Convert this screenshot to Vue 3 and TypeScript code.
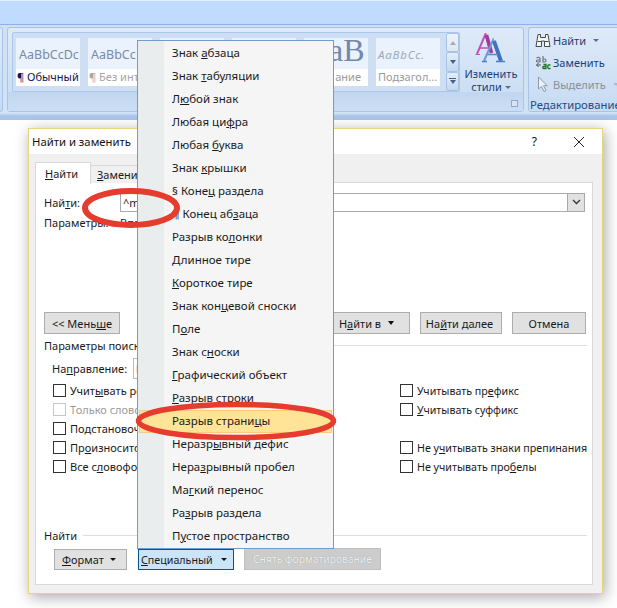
<script setup lang="ts">
const menu = [
  ['Знак ', 'а', 'бзаца'], ['Знак ', 'т', 'абуляции'], ['Л', 'ю', 'бой знак'], ['Любая ци', 'ф', 'ра'],
  ['Любая ', 'б', 'уква'], ['Знак ', 'к', 'рышки'], ['§ Коне', 'ц', ' раздела'], ['¶ Конец аб', 'з', 'аца'],
  ['Разрыв ко', 'л', 'онки'], ['', 'Д', 'линное тире'], ['', 'К', 'ороткое тире'], ['Знак кон', 'ц', 'евой сноски'],
  ['П', 'о', 'ле'], ['Знак с', 'н', 'оски'], ['', 'Г', 'рафический объект'], ['', 'Р', 'азрыв строки'],
  ['Разрыв страни', 'ц', 'ы'], ['Неразр', 'ы', 'вный дефис'], ['Нера', 'з', 'рывный пробел'], ['Ма', 'г', 'кий перенос'],
  ['Ра', 'з', 'рыв раздела'], ['П', 'у', 'стое пространство']
]
const leftChecks = [
  { pre: 'Учит', u: 'ы', post: 'вать регистр', off: false },
  { pre: 'Только слово целиком', u: '', post: '', off: true },
  { pre: 'Подстановочные знаки', u: '', post: '', off: false },
  { pre: 'Пр', u: 'о', post: 'износится как', off: false },
  { pre: 'Все с', u: 'л', post: 'овоформы', off: false }
]
const styles = [
  { id: 1, sample: 'AaBbCcDc', name: '¶ Обычный', kind: 'normal' },
  { id: 2, sample: 'AaBbCc', name: '¶ Без инт', kind: 'dim' },
  { id: 3, sample: '', name: '', kind: 'dim' },
  { id: 4, sample: '', name: '', kind: 'dim' },
  { id: 5, sample: 'aB', name: 'ание', kind: 'big' },
  { id: 6, sample: 'AaBbCc.', name: 'Подзагол...', kind: 'ital' }
]
</script>

<template>
  <div class="page">
    <div class="titlebar"></div>
    <div class="ribbon">
      <div class="group prev-group"></div>
      <div class="group styles-group">
        <div class="gallery">
          <div v-for="s in styles" :key="s.id" class="style-card" :class="s.kind">
            <span class="sample">{{ s.sample }}</span>
            <span class="style-name">{{ s.name }}</span>
          </div>
          <div class="scroller">
            <span class="scroll-btn disabled"><i class="tri up"></i></span>
            <span class="scroll-btn"><i class="tri"></i></span>
            <span class="scroll-btn"><i class="bar"></i><i class="tri"></i></span>
          </div>
        </div>
        <div class="change-styles">
          <svg width="32" height="30" viewBox="0 0 32 30" class="aa">
            <path d="M2 21 L10.500 1 L15 18" fill="none" stroke="#c054b4" stroke-width="2"/>
            <path d="M11.500 2 L16.500 20" fill="none" stroke="#a13c9d" stroke-width="3.600"/>
            <path d="M4.500 15 H14" stroke="#c054b4" stroke-width="1.500"/>
            <path d="M0.500 21.500H5M12 21.500H18" stroke="#c054b4" stroke-width="1.200"/>
            <path d="M9 28 L18 7 L25 28" fill="none" stroke="#6d9ad8" stroke-width="2"/>
            <path d="M19 8 L26 28" fill="none" stroke="#3f73bd" stroke-width="3.800"/>
            <path d="M12.500 21.500 H23" stroke="#5c8bcd" stroke-width="1.600"/>
            <path d="M7 28.500H12M21 28.500H30" stroke="#4a7dc4" stroke-width="1.300"/>
          </svg>
          <span>Изменить</span>
          <span>стили <i class="tri small"></i></span>
        </div>
        <div class="group-foot">
          <span class="launcher"></span>
        </div>
      </div>
      <div class="group edit-group">
        <div class="edit-row">
          <svg width="16" height="15" viewBox="0 0 16 15">
            <path d="M3 1.500h2.500v3h5v-3H13l1 6 1 6H9.500V8h-3v5.500H1l1-6z" fill="#f7f4e8" stroke="#3f4a5a"/>
            <path d="M2.500 8.500h3.500M10 8.500h3.500" stroke="#3f4a5a"/>
          </svg>
          <span class="edit-label">Найти</span><i class="tri small"></i>
        </div>
        <div class="edit-row">
          <svg width="16" height="15" viewBox="0 0 16 15">
            <path d="M1.500 10h4.500M1.500 10l2-2M1.500 10l2 2" fill="none" stroke="#46566b"/>
            <path d="M8 1v6h1.500c2 0 2-3 0-3H8" fill="none" stroke="#6e7680" stroke-width="1.200"/>
            <path d="M1.500 3c2-1.500 3.500-.5 3.500 1v3H2.500c-1.500 0-1.500-2 0-2H5" fill="none" stroke="#6e7680" stroke-width="1.200"/>
            <path d="M8.500 9.500h2.500v4H8.500c-1 0-1-2 0-2H11" fill="none" stroke="#1f7a25" stroke-width="1.300"/>
            <path d="M15.500 10h-2c-1 0-1 3.500 0 3.500h2" fill="none" stroke="#1f7a25" stroke-width="1.300"/>
          </svg>
          <span class="edit-label">Заменить</span>
        </div>
        <div class="edit-row off">
          <svg width="16" height="17" viewBox="0 0 16 17"><path d="M3.500 1v12l3-2.500 2.500 5 2-1-2.500-4.800h3.800z" fill="#eaf1fa" stroke="#8d99a9"/></svg>
          <span class="edit-label">Выделить</span><i class="tri small grey"></i>
        </div>
        <div class="edit-foot">Редактирование</div>
      </div>
    </div>

    <div class="dialog">
      <div class="dlg-title">
        <span>Найти и заменить</span>
        <span class="help">?</span>
        <svg width="12" height="12" viewBox="0 0 12 12" class="close"><path d="M1 1l10 10M11 1L1 11" stroke="#222" stroke-width="1"/></svg>
      </div>
      <div class="dlg-body">
        <div class="tabs">
          <div class="tab active"><u>Н</u>айти</div>
          <div class="tab"><u>З</u>аменить</div>
          <div class="tab-rest"></div>
        </div>
        <div class="panel">
          <div class="find-row">
            <label>Най<u>т</u>и:</label>
            <div class="find-input">
              <span>^m</span>
              <span class="combo-btn"><svg width="9" height="6" viewBox="0 0 9 6"><path d="M1 1l3.500 3.500L8 1" stroke="#333" stroke-width="1.300" fill="none"/></svg></span>
            </div>
          </div>
          <div class="param-row">
            <span>Параметры:</span><span class="param-value">Вперёд</span>
          </div>
          <div class="btn-row">
            <button class="btn less"><span>&lt;&lt; Мень<u>ш</u>е</span></button>
            <div class="btn-right">
              <button class="btn find-in"><span>Н<u>а</u>йти в</span><i class="tri black wide"></i></button>
              <button class="btn find-next"><span>На<u>й</u>ти далее</span></button>
              <button class="btn cancel">Отмена</button>
            </div>
          </div>
          <div class="legend search-head"><span>Параметры поиска</span><span class="legend-line"></span></div>
          <div class="direction">
            <span class="dir-label">На<u>п</u>равление:</span>
            <span class="dir-select"><i class="dir-mark"></i></span>
          </div>
          <div class="checks">
            <div class="check-col left-col">
              <div v-for="c in leftChecks" :key="c.pre" class="check" :class="{ off: c.off }">
                <i class="box"></i><span>{{ c.pre }}<u v-if="c.u">{{ c.u }}</u>{{ c.post }}</span>
              </div>
            </div>
            <div class="check-col right-col">
              <div class="check"><i class="box"></i><span>Учитывать пр<u>е</u>фикс</span></div>
              <div class="check"><i class="box"></i><span><u>У</u>читывать суффикс</span></div>
              <div class="check gap"></div>
              <div class="check"><i class="box"></i><span>Не у<u>ч</u>итывать знаки препинания</span></div>
              <div class="check"><i class="box"></i><span>Не учитывать про<u>б</u>елы</span></div>
            </div>
          </div>
          <div class="legend find-legend"><span>Найти</span><span class="legend-line"></span></div>
          <div class="bottom-row">
            <button class="btn fmt"><span><u>Ф</u>ормат</span><i class="tri black"></i></button>
            <button class="btn special"><span><u>С</u>пециальный</span><i class="tri black"></i></button>
            <button class="btn clear" disabled>Снять форматирование</button>
          </div>
        </div>
      </div>
    </div>

    <div class="menu">
      <div v-for="(m, i) in menu" :key="i" class="menu-item" :class="{ hot: i === 16 }">
        <span>{{ m[0] }}<u>{{ m[1] }}</u>{{ m[2] }}</span>
      </div>
    </div>

    <svg class="marks" width="617" height="608" viewBox="0 0 617 608">
      <ellipse cx="131" cy="208" rx="46" ry="17" fill="none" stroke="#e53c2e" stroke-width="6"/>
      <ellipse cx="236" cy="421" rx="97.500" ry="16.500" fill="none" stroke="#e53c2e" stroke-width="5.500"/>
    </svg>
  </div>
</template>

<style>
html, body { margin: 0; background: #fff; }
</style>

<style scoped>
.page {
  position: relative;
  width: 617px;
  height: 608px;
  overflow: hidden;
  background: #fff;
  font-family: "Noto Sans", "Open Sans", sans-serif;
  font-size: 11px;
  color: #1a1a1a;
}
u { text-underline-offset: 1px; }
i { font-style: normal; display: inline-block; }
button { font: inherit; color: inherit; padding: 0; box-sizing: border-box; }

.titlebar { height: 24px; background: #bfdbff; border-top: 1px solid #e4eefc; box-sizing: border-box; }
.ribbon {
  height: 96px;
  box-sizing: border-box;
  display: flex;
  gap: 4px;
  padding: 2px 0 8px;
  background: linear-gradient(#cfe0f5 0, #d3e3f6 88px, #a9c5e9 91px, #a9c5e9 100%);
  border-top: 1px solid #8db2e3;
}
.group {
  position: relative;
  display: flex;
  background: linear-gradient(#dfeaf8, #c6dbf3);
  border: 1px solid #a8c4e8;
  border-radius: 3px;
  box-sizing: border-box;
}
.prev-group { width: 8px; margin-left: -5px; flex: none; }
.styles-group { width: 517px; flex: none; padding: 4px 0 0 4px; }
.edit-group { flex: 1; border-right: none; display: block; padding: 1px 0 0 6px; }
.gallery {
  display: flex;
  width: 448px;
  height: 60px;
  flex: none;
  box-sizing: border-box;
  padding: 5px 0 4px 3px;
  background: #cfdff3;
  border: 1px solid #aac7ea;
  border-radius: 2px;
}
.style-card {
  display: flex;
  flex-direction: column;
  width: 64px;
  height: 48px;
  margin-right: 8px;
  background: linear-gradient(#eaf2fd 0, #eaf2fd 31px, #fff 31px);
  overflow: hidden;
  white-space: nowrap;
  flex: none;
}
.style-card.ital { margin-right: 6px; }
.sample {
  height: 31px;
  line-height: 33px;
  padding-left: 3px;
  font-size: 12.500px;
  color: #7b8ba6;
}
.style-name { height: 17px; line-height: 16px; padding-left: 1px; color: #a6a6a6; }
.normal .style-name { color: #10105a; }
.ital .sample { font-style: italic; font-size: 11.500px; letter-spacing: 0.800px; color: #9ba8c0; padding-left: 2px; }
.ital .style-name { padding-left: 2px; color: #9a9a9a; }
.big .sample {
  font-family: "Liberation Serif", serif;
  font-size: 32px;
  line-height: 25px;
  color: #7288ab;
  padding-left: 25px;
}
.big .style-name { text-align: right; padding-right: 7px; color: #9a9a9a; }
.scroller { flex: none; width: 13px; display: flex; flex-direction: column; gap: 0; margin: -5px 0 -4px; }
.scroll-btn {
  flex: 1;
  display: flex;
  flex-direction: column;
  align-items: center;
  justify-content: center;
  gap: 1px;
  background: linear-gradient(#e4edf8, #c3d8f0);
  border: 1px solid #a9c3e4;
  border-radius: 2px;
}
.scroll-btn.disabled { background: linear-gradient(#eef3fa, #dfe7f1); }
.bar { width: 7px; height: 1px; background: #44618c; }
.tri { width: 0; height: 0; border: 3px solid transparent; border-top: 4px solid #44618c; border-bottom: 0; }
.tri.up { border-top: 0; border-bottom: 4px solid #a3adba; }
.tri.small { border-width: 3px 3px 0; border-top-color: #55709a; vertical-align: 2px; }
.tri.grey { border-top-color: #b0bac7; }
.tri.black { border-width: 3px 3px 0; border-top-color: #111; vertical-align: 1px; }
.tri.black.wide { border-width: 4px 3.500px 0; }
.change-styles {
  display: flex;
  flex-direction: column;
  align-items: center;
  flex: none;
  width: 62px;
  line-height: 13px;
  color: #1a3f78;
}
.aa { margin-top: 1px; margin-bottom: 4px; }
.group-foot {
  position: absolute;
  left: 0;
  right: 0;
  bottom: 0;
  height: 19px;
  background: linear-gradient(#c1d6ef, #cbdef5);
}
.launcher {
  position: absolute;
  right: 5px;
  top: 8px;
  width: 5px;
  height: 5px;
  border: 1px solid #8ea9ca;
  background: #d8e4f3;
}
.edit-foot {
  position: absolute;
  left: 0;
  right: 0;
  bottom: 0;
  height: 14px;
  padding-left: 1px;
  background: #c8dcf4;
  color: #1f4a84;
  font-size: 11.300px;
  line-height: 15px;
  white-space: nowrap;
  overflow: hidden;
}
.edit-row {
  height: 22px;
  display: flex;
  align-items: center;
  color: #1a3f78;
  white-space: nowrap;
}
.edit-row.off { color: #8a8f97; }
.edit-row svg { flex: none; }
.edit-label { margin-left: 2px; margin-right: 7px; }

.dialog {
  position: absolute;
  left: 28px;
  top: 128px;
  width: 575px;
  height: 466px;
  box-sizing: border-box;
  border: 1px solid #e5d57e;
  background: #f0f0f0;
  box-shadow: 2px 3px 14px rgba(0, 0, 0, 0.35);
  display: flex;
  flex-direction: column;
}
.dlg-title {
  height: 25px;
  flex: none;
  background: #fff;
  display: flex;
  align-items: center;
  padding: 0 17px 0 3px;
  font-size: 11.300px;
  color: #111;
}
.help { margin-left: auto; margin-right: 36px; font-size: 12px; }
.dlg-body { flex: 1; padding: 7px 9px 8px 6px; display: flex; flex-direction: column; min-height: 0; }
.tabs { display: flex; height: 22px; flex: none; align-items: flex-end; }
.tab {
  height: 18px;
  line-height: 18px;
  background: #f0f0f0;
  border: 1px solid #d9d9d9;
  border-bottom: none;
  border-left: none;
  padding-left: 6px;
  width: 60px;
  box-sizing: border-box;
}
.tab.active {
  height: 22px;
  line-height: 22px;
  width: 56px;
  padding: 0 0 0 9px;
  background: #fff;
  border-left: 1px solid #d9d9d9;
  position: relative;
  top: 1px;
}
.tab-rest { flex: 1; border-bottom: 1px solid #d9d9d9; }
.panel {
  flex: 1;
  background: #fff;
  border: 1px solid #d9d9d9;
  border-top: none;
  padding: 9px 7px 0 8px;
  display: flex;
  flex-direction: column;
  min-height: 0;
}
.find-row { display: flex; align-items: center; height: 20px; }
.find-row label { width: 76px; flex: none; }
.find-input {
  flex: 1;
  height: 19px;
  box-sizing: border-box;
  border: 1px solid #a9a9a9;
  display: flex;
  align-items: center;
  justify-content: space-between;
  padding-left: 2px;
}
.combo-btn {
  width: 16px;
  height: 17px;
  background: #e1e1e1;
  border-left: 1px solid #a9a9a9;
  display: flex;
  align-items: center;
  justify-content: center;
}
.param-row { display: flex; height: 20px; align-items: center; }
.param-row span:first-child { width: 76px; flex: none; }
.btn-row { display: flex; justify-content: space-between; margin-top: 80px; margin-right: -1px; }
.btn {
  height: 22px;
  background: #e1e1e1;
  border: 1px solid #adadad;
  display: inline-flex;
  align-items: center;
  justify-content: center;
}
.less { width: 76px; }
.btn-right { display: flex; gap: 10px; }
.find-in { width: 83px; gap: 7px; padding-right: 4px; }
.find-next { width: 82px; padding-right: 3px; }
.cancel { width: 74px; }
.legend { display: flex; align-items: center; gap: 6px; height: 16px; }
.legend-line { flex: 1; height: 1px; background: #dedede; margin-right: -2px; }
.search-head { margin-top: 3px; }
.direction { display: flex; align-items: center; height: 21px; margin-top: 5px; padding-left: 8px; }
.dir-label { width: 81px; flex: none; }
.dir-select { flex: none; width: 30px; height: 21px; border: 1px solid #bcbcbc; box-sizing: border-box; display: flex; align-items: center; padding-left: 2px; }
.dir-mark { width: 3px; height: 8px; background: #fce2b8; }
.checks { display: flex; margin-top: 2px; padding-left: 9px; }
.check-col { display: flex; flex-direction: column; }
.left-col { width: 347px; flex: none; }
.right-col { font-size: 10.700px; }
.check { height: 19px; display: flex; align-items: center; gap: 4px; white-space: nowrap; }
.check.off { color: #9b9b9b; }
.check.off .box { border-color: #c6c6c6; }
.box { width: 11px; height: 11px; border: 1px solid #333; flex: none; background: #fff; }
.find-legend { margin-top: 51px; }
.bottom-row { display: flex; align-items: flex-start; gap: 10px; margin-top: 6px; padding-left: 10px; }
.fmt { width: 73px; height: 21px; justify-content: space-between; padding: 0 10px 0 7px; }
.special {
  width: 96px;
  height: 21px;
  margin-left: 1px;
  justify-content: space-between;
  padding: 0 6px 0 2px;
  background: #cce4f7;
  border-color: #005499;
  font-size: 10.700px;
}
.clear {
  width: 137px;
  background: #cccccc;
  border-color: #bfbfbf;
  color: #eee;
  text-shadow: 0 0 1px #999;
  margin-top: -1px;
  font-size: 10.300px;
}

.menu {
  position: absolute;
  left: 137px;
  top: 40px;
  width: 197px;
  height: 509px;
  box-sizing: border-box;
  padding-top: 1px;
  border: 1px solid #6f9bd1;
  background: linear-gradient(90deg, #e9eded 26px, #f5f5f5 26px);
}
.menu-item {
  height: 23px;
  line-height: 22px;
  padding-left: 34px;
  font-size: 11.500px;
  color: #1a1a1a;
  white-space: nowrap;
}
.menu-item.hot {
  background: #ffe396;
  box-shadow: inset 0 0 0 1px #fbc87d;
  margin-left: 1px;
  margin-right: 1px;
  padding-left: 33px;
}
.marks { position: absolute; left: 0; top: 0; pointer-events: none; }
</style>
